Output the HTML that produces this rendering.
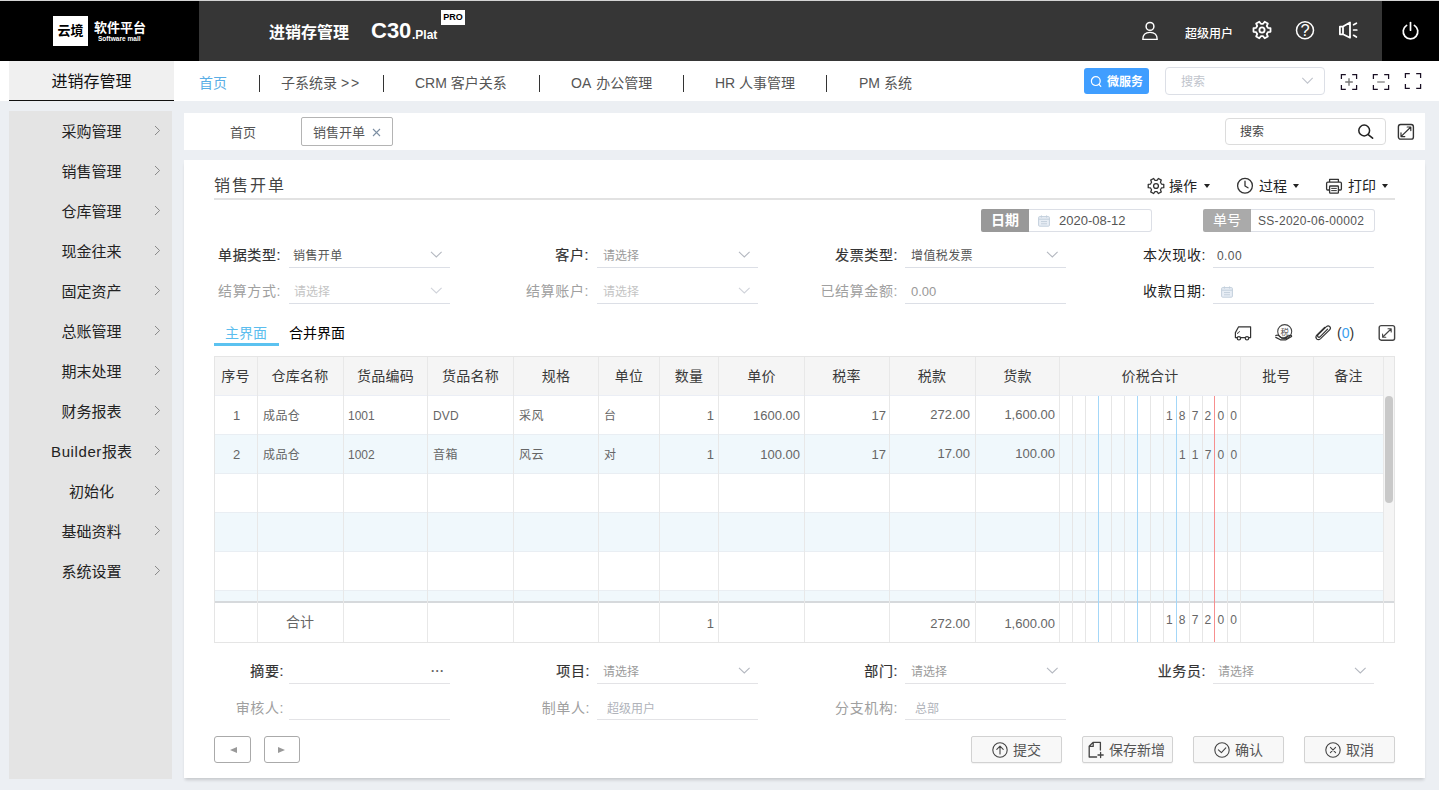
<!DOCTYPE html>
<html lang="zh-CN">
<head>
<meta charset="utf-8">
<title>销售开单 - 进销存管理</title>
<style>
*{box-sizing:border-box;margin:0;padding:0}
html,body{width:1439px;height:790px;overflow:hidden}
body{background:#eceff3;font-family:"Liberation Sans","Noto Sans CJK SC",sans-serif;position:relative;color:#333;font-size:14px}
.a{position:absolute}
.t{position:absolute;white-space:nowrap;line-height:20px;height:20px}
.c{text-align:center}
.r{text-align:right}
svg{position:absolute;overflow:visible}
.ic{fill:none;stroke:#fff;stroke-width:1.5;stroke-linecap:round;stroke-linejoin:round}
.id{fill:none;stroke:#333;stroke-width:1.3;stroke-linecap:round;stroke-linejoin:round}
/* header */
#hd{left:0;top:0;width:1439px;height:61px;background:#363636}
/* nav */
#nv{left:0;top:61px;width:1439px;height:40px;background:#fff}
.ni{font-size:14px;color:#555;top:73px}
.nd{width:1px;height:17px;top:75px;background:#333}
/* sidebar */
#sb{left:9px;top:111px;width:163px;height:668px;background:#e4e4e4}
.si{left:0;width:165px;height:40px;line-height:42px;font-size:15px;color:#222;text-align:center;position:absolute}
.si svg{left:145px;top:14px}
/* form */
.lb{font-size:14px;font-weight:400;-webkit-text-stroke:.2px #333;color:#333;text-align:right;letter-spacing:.6px}
.lg{font-size:14px;color:#a0a0a0;text-align:right;letter-spacing:.6px}
.ul{height:1px;background:#dcdfe6;width:161px}
.ug{background:#e3e3e6}
.v{font-size:12px;color:#555;letter-spacing:.4px;margin-top:1px;margin-left:-1px}
.ph{font-size:12px;color:#9b9b9b;margin-top:1px}
.pl{font-size:12px;color:#c4c4c4;margin-top:1px}
/* table */
.th{font-size:14px;color:#3a3a3a;font-weight:400;letter-spacing:.3px;text-align:center;top:366px}
.vl{width:1px;background:#e8e8e8;top:356px;height:286px}
.td{font-size:12px;color:#666;margin-top:1px;letter-spacing:.4px}
#mg i{position:absolute;top:0;width:1px;height:246px;background:#e6e6e6}
#mg i.b{background:#a4d7f8}
#mg i.rd{background:#f78f8f}
.mn b{display:inline-block;width:12.9px;text-align:center;font-weight:normal;font-size:12px}
.cv path{fill:none;stroke:#b4b8c0;stroke-width:1.1}
.cl path{stroke:#d0d3da}
.btn{height:27px;width:91px;border:1px solid #d2d2d2;border-radius:2px;background:#f8f8f8;top:736px;box-shadow:0 1px 1px rgba(0,0,0,.05)}
</style>
</head>
<body>

<!-- ================= HEADER ================= -->
<div class="a" id="hd">
  <div class="a" style="left:0;top:0;width:1439px;height:1px;background:#d4d4d4"></div>
  <div class="a" style="left:0;top:1px;width:199px;height:60px;background:#000"></div>
  <div class="a" style="left:1382px;top:1px;width:57px;height:60px;background:#000"></div>
  <div class="a c" style="left:53px;top:16px;width:35px;height:30px;background:#fff;color:#000;font-size:13px;font-weight:bold;line-height:30px">云境</div>
  <div class="t" style="left:94px;top:18px;font-size:13px;font-weight:bold;color:#fff">软件平台</div>
  <div class="t" style="left:98px;top:29px;font-size:14px;color:#fff;transform:scale(.468);transform-origin:0 50%;font-weight:bold">Software mall</div>
  <div class="t" style="left:269px;top:23px;font-size:16px;font-weight:bold;color:#fff">进销存管理</div>
  <div class="t" style="left:371px;top:16px;font-size:22px;font-weight:bold;color:#fff;line-height:30px;height:30px">C30</div>
  <div class="t" style="left:412px;top:25px;font-size:12px;font-weight:bold;color:#fff">.Plat</div>
  <div class="a" style="left:441px;top:10px;width:24px;height:15px;background:#fff"></div>
  <div class="a c" style="left:437px;top:7px;width:32px;height:20px;color:#000;font-size:12px;font-weight:bold;line-height:20px;transform:scale(.75);transform-origin:50% 50%">PRO</div>
  <div class="t" style="left:1185px;top:24px;font-size:12px;color:#fff;font-weight:500">超级用户</div>
</div>

<!-- ================= NAV ================= -->
<div class="a" id="nv"></div>
<div class="a c" style="left:9px;top:61px;width:165px;height:40px;background:#f0f0f0;border-bottom:1px solid #111;font-size:16px;color:#111;line-height:42px">进销存管理</div>
<div class="t ni" style="left:199px;color:#5aaee6">首页</div>
<div class="a nd" style="left:259px"></div>
<div class="t ni" style="left:281px">子系统录 <span style="letter-spacing:2px">&gt;&gt;</span></div>
<div class="a nd" style="left:383px"></div>
<div class="t ni" style="left:415px">CRM 客户关系</div>
<div class="a nd" style="left:539px"></div>
<div class="t ni" style="left:571px;word-spacing:2px">OA 办公管理</div>
<div class="a nd" style="left:683px"></div>
<div class="t ni" style="left:715px">HR 人事管理</div>
<div class="a nd" style="left:826px"></div>
<div class="t ni" style="left:859px">PM 系统</div>

<div class="a" style="left:1084px;top:68px;width:65px;height:26px;background:#409eff;border-radius:3px"></div>
<div class="t" style="left:1107px;top:72px;font-size:12px;color:#fff;font-weight:bold">微服务</div>
<div class="a" style="left:1165px;top:67px;width:160px;height:28px;border:1px solid #dcdfe6;border-radius:4px;background:#fff"></div>
<div class="t" style="left:1181px;top:72px;font-size:12px;color:#c0c4cc">搜索</div>

<!-- ================= SIDEBAR ================= -->
<div class="a" id="sb">
  <div class="si" style="top:0">采购管理<svg width="7" height="11" viewBox="0 0 7 11"><path d="M1 1 L5.6 5.5 L1 10" fill="none" stroke="#888" stroke-width="1"/></svg></div>
  <div class="si" style="top:40px">销售管理<svg width="7" height="11" viewBox="0 0 7 11"><path d="M1 1 L5.6 5.5 L1 10" fill="none" stroke="#888" stroke-width="1"/></svg></div>
  <div class="si" style="top:80px">仓库管理<svg width="7" height="11" viewBox="0 0 7 11"><path d="M1 1 L5.6 5.5 L1 10" fill="none" stroke="#888" stroke-width="1"/></svg></div>
  <div class="si" style="top:120px">现金往来<svg width="7" height="11" viewBox="0 0 7 11"><path d="M1 1 L5.6 5.5 L1 10" fill="none" stroke="#888" stroke-width="1"/></svg></div>
  <div class="si" style="top:160px">固定资产<svg width="7" height="11" viewBox="0 0 7 11"><path d="M1 1 L5.6 5.5 L1 10" fill="none" stroke="#888" stroke-width="1"/></svg></div>
  <div class="si" style="top:200px">总账管理<svg width="7" height="11" viewBox="0 0 7 11"><path d="M1 1 L5.6 5.5 L1 10" fill="none" stroke="#888" stroke-width="1"/></svg></div>
  <div class="si" style="top:240px">期末处理<svg width="7" height="11" viewBox="0 0 7 11"><path d="M1 1 L5.6 5.5 L1 10" fill="none" stroke="#888" stroke-width="1"/></svg></div>
  <div class="si" style="top:280px">财务报表<svg width="7" height="11" viewBox="0 0 7 11"><path d="M1 1 L5.6 5.5 L1 10" fill="none" stroke="#888" stroke-width="1"/></svg></div>
  <div class="si" style="top:320px"><span style="letter-spacing:.6px">Builder</span>报表<svg width="7" height="11" viewBox="0 0 7 11"><path d="M1 1 L5.6 5.5 L1 10" fill="none" stroke="#888" stroke-width="1"/></svg></div>
  <div class="si" style="top:360px">初始化<svg width="7" height="11" viewBox="0 0 7 11"><path d="M1 1 L5.6 5.5 L1 10" fill="none" stroke="#888" stroke-width="1"/></svg></div>
  <div class="si" style="top:400px">基础资料<svg width="7" height="11" viewBox="0 0 7 11"><path d="M1 1 L5.6 5.5 L1 10" fill="none" stroke="#888" stroke-width="1"/></svg></div>
  <div class="si" style="top:440px">系统设置<svg width="7" height="11" viewBox="0 0 7 11"><path d="M1 1 L5.6 5.5 L1 10" fill="none" stroke="#888" stroke-width="1"/></svg></div>
</div>

<!-- ================= TAB BAR ================= -->
<div class="a" style="left:184px;top:113px;width:1241px;height:37px;background:#fff"></div>
<div class="t" style="left:230px;top:123px;font-size:13px;color:#555">首页</div>
<div class="a" style="left:301px;top:117px;width:92px;height:29px;border:1px solid #b4b4b4;border-radius:2px;background:#fff"></div>
<div class="t" style="left:313px;top:123px;font-size:13px;color:#555">销售开单</div>
<div class="a" style="left:1224.5px;top:118px;width:161px;height:27px;border:1px solid #dcdcdc;border-radius:4px;background:#fff"></div>
<div class="t" style="left:1240px;top:122px;font-size:12px;color:#444">搜索</div>

<!-- ================= MAIN PANEL ================= -->
<div class="a" style="left:184px;top:160px;width:1241px;height:618px;background:#fff;box-shadow:0 3px 3px -1px rgba(0,0,0,.16)"></div>
<div class="t" style="left:214px;top:176px;font-size:16px;color:#444;letter-spacing:2px">销售开单</div>
<div class="a" style="left:214px;top:198px;width:1181px;height:2px;background:#e2e2e2"></div>
<div class="t" style="left:1169px;top:176px;font-size:14px;color:#222">操作</div>
<div class="t" style="left:1259px;top:176px;font-size:14px;color:#222">过程</div>
<div class="t" style="left:1348px;top:176px;font-size:14px;color:#222">打印</div>
<div class="a" style="left:1204px;top:184px;border:3.5px solid transparent;border-top:4px solid #222;border-bottom:0"></div>
<div class="a" style="left:1293px;top:184px;border:3.5px solid transparent;border-top:4px solid #222;border-bottom:0"></div>
<div class="a" style="left:1382px;top:184px;border:3.5px solid transparent;border-top:4px solid #222;border-bottom:0"></div>

<!-- date / number -->
<div class="a c" style="left:981px;top:209px;width:48px;height:23px;background:#999;color:#fff;font-size:14px;font-weight:bold;line-height:23px;border-radius:2px 0 0 2px">日期</div>
<div class="a" style="left:1029px;top:209px;width:123px;height:23px;border:1px solid #dcdfe6;border-left:0;border-radius:0 3px 3px 0"></div>
<div class="t" style="left:1059px;top:211px;font-size:13px;color:#555">2020-08-12</div>
<div class="a c" style="left:1203px;top:209px;width:48px;height:23px;background:#aaa;color:#fff;font-size:14px;line-height:23px;border-radius:2px 0 0 2px">单号</div>
<div class="a" style="left:1251px;top:209px;width:124px;height:23px;border:1px solid #dcdfe6;border-left:0;border-radius:0 3px 3px 0"></div>
<div class="t" style="left:1258px;top:211px;font-size:12px;color:#555;letter-spacing:.3px">SS-2020-06-00002</div>

<!-- form row 1 -->
<div class="t lb" style="left:180px;width:101px;top:245px">单据类型:</div>
<div class="t v" style="left:294px;top:245px">销售开单</div>
<div class="a ul" style="left:289px;top:267px"></div>
<div class="t lb" style="left:488px;width:101px;top:245px">客户:</div>
<div class="t ph" style="left:603px;top:245px">请选择</div>
<div class="a ul" style="left:597px;top:267px"></div>
<div class="t lb" style="left:797px;width:101px;top:245px">发票类型:</div>
<div class="t v" style="left:912px;top:245px">增值税发票</div>
<div class="a ul" style="left:905px;top:267px"></div>
<div class="t lb" style="left:1105px;width:101px;top:245px;-webkit-text-stroke:0;color:#222">本次现收:</div>
<div class="t v" style="left:1218px;top:245px">0.00</div>
<div class="a ul" style="left:1213px;top:267px"></div>
<!-- form row 2 -->
<div class="t lg" style="left:180px;width:101px;top:281px">结算方式:</div>
<div class="t pl" style="left:294px;top:281px">请选择</div>
<div class="a ul" style="left:289px;top:303px"></div>
<div class="t lg" style="left:488px;width:101px;top:281px">结算账户:</div>
<div class="t pl" style="left:603px;top:281px">请选择</div>
<div class="a ul" style="left:597px;top:303px"></div>
<div class="t lg" style="left:797px;width:101px;top:281px">已结算金额:</div>
<div class="t ph" style="left:911px;top:281px;font-size:13px;color:#999">0.00</div>
<div class="a ul" style="left:905px;top:303px"></div>
<div class="t lb" style="left:1105px;width:101px;top:281px;-webkit-text-stroke:0;color:#222">收款日期:</div>
<div class="a ul" style="left:1213px;top:303px"></div>

<!-- inner tabs -->
<div class="t" style="left:225px;top:323px;font-size:14px;color:#5bbdee">主界面</div>
<div class="a" style="left:214px;top:343px;width:65px;height:3px;background:#5bc2f0"></div>
<div class="t" style="left:289px;top:323px;font-size:14px;color:#000">合并界面</div>
<div class="t" style="left:1337px;top:323px;font-size:14px;color:#333">(<span style="color:#3a9ff0">0</span>)</div>
<!-- ================= TABLE ================= -->
<div class="a" style="left:214px;top:356px;width:1181px;height:40px;background:#f5f5f5"></div>
<div class="a" style="left:214px;top:434px;width:1170px;height:39px;background:#f0f8fc"></div>
<div class="a" style="left:214px;top:512px;width:1170px;height:39px;background:#f0f8fc"></div>
<div class="a" style="left:214px;top:590px;width:1170px;height:12px;background:#f0f8fc"></div>
<div class="a" style="left:1384px;top:395px;width:10px;height:207px;background:#f5f5f5"></div>
<div class="a" style="left:1385px;top:396px;width:8px;height:107px;background:#c9c9c9;border-radius:4px"></div>
<!-- horizontal lines -->
<div class="a" style="left:214px;top:395px;width:1170px;height:1px;background:#ebeef5"></div>
<div class="a" style="left:214px;top:434px;width:1170px;height:1px;background:#e9eef3"></div>
<div class="a" style="left:214px;top:473px;width:1170px;height:1px;background:#e9eef3"></div>
<div class="a" style="left:214px;top:512px;width:1170px;height:1px;background:#e9eef3"></div>
<div class="a" style="left:214px;top:551px;width:1170px;height:1px;background:#e9eef3"></div>
<div class="a" style="left:214px;top:590px;width:1170px;height:1px;background:#e9eef3"></div>
<div class="a" style="left:214px;top:601px;width:1181px;height:2px;background:#d6d9dc"></div>
<!-- vertical lines -->
<div class="a vl" style="left:257px"></div>
<div class="a vl" style="left:343px"></div>
<div class="a vl" style="left:427px"></div>
<div class="a vl" style="left:513px"></div>
<div class="a vl" style="left:598px"></div>
<div class="a vl" style="left:659px"></div>
<div class="a vl" style="left:718px"></div>
<div class="a vl" style="left:804px"></div>
<div class="a vl" style="left:889px"></div>
<div class="a vl" style="left:975px"></div>
<div class="a vl" style="left:1059px"></div>
<div class="a vl" style="left:1240px"></div>
<div class="a vl" style="left:1313px"></div>
<div class="a vl" style="left:1383px"></div>
<!-- money grid -->
<div class="a" id="mg" style="left:1060px;top:396px;width:180px;height:246px">
  <i style="left:12.4px"></i><i style="left:25.3px"></i><i class="b" style="left:38.2px"></i>
  <i style="left:51.1px"></i><i style="left:64px"></i><i class="b" style="left:77px"></i>
  <i style="left:89.9px"></i><i style="left:102.8px"></i><i class="b" style="left:115.7px"></i>
  <i style="left:128.6px"></i><i style="left:141.5px"></i><i class="rd" style="left:154.1px"></i>
  <i style="left:167.3px"></i>
</div>
<div class="a" style="left:214px;top:356px;width:1181px;height:287px;border:1px solid #e5e5e5"></div>
<!-- header text -->
<div class="t th" style="left:214px;width:43px">序号</div>
<div class="t th" style="left:257px;width:86px">仓库名称</div>
<div class="t th" style="left:343px;width:85px">货品编码</div>
<div class="t th" style="left:428px;width:85px">货品名称</div>
<div class="t th" style="left:513px;width:86px">规格</div>
<div class="t th" style="left:599px;width:60px">单位</div>
<div class="t th" style="left:659px;width:60px">数量</div>
<div class="t th" style="left:719px;width:85px">单价</div>
<div class="t th" style="left:804px;width:85px">税率</div>
<div class="t th" style="left:889px;width:86px">税款</div>
<div class="t th" style="left:975px;width:85px">货款</div>
<div class="t th" style="left:1060px;width:180px">价税合计</div>
<div class="t th" style="left:1240px;width:73px">批号</div>
<div class="t th" style="left:1313px;width:71px">备注</div>
<!-- row 1 -->
<div class="t td c" style="left:214px;width:45px;top:405px;font-size:13px;letter-spacing:0">1</div>
<div class="t td" style="left:263px;top:405px">成品仓</div>
<div class="t td" style="left:348px;top:405px;font-size:12px;letter-spacing:0">1001</div>
<div class="t td" style="left:433px;top:405px;font-size:12px;letter-spacing:.2px">DVD</div>
<div class="t td" style="left:519px;top:405px">采风</div>
<div class="t td" style="left:604px;top:405px">台</div>
<div class="t td r" style="left:659px;width:55px;top:405px;font-size:13px;letter-spacing:0">1</div>
<div class="t td r" style="left:719px;width:81px;top:405px;font-size:13px;letter-spacing:0">1600.00</div>
<div class="t td r" style="left:804px;width:82px;top:405px;font-size:13px;letter-spacing:0">17</div>
<div class="t td r" style="left:889px;width:81px;top:404px;font-size:13px;letter-spacing:0">272.00</div>
<div class="t td r" style="left:975px;width:80px;top:404px;font-size:13px;letter-spacing:0">1,600.00</div>
<div class="t td mn" style="left:1163px;top:405px"><b>1</b><b>8</b><b>7</b><b>2</b><b>0</b><b>0</b></div>
<!-- row 2 -->
<div class="t td c" style="left:214px;width:45px;top:444px;font-size:13px;letter-spacing:0">2</div>
<div class="t td" style="left:263px;top:444px">成品仓</div>
<div class="t td" style="left:348px;top:444px;font-size:12px;letter-spacing:0">1002</div>
<div class="t td" style="left:433px;top:444px">音箱</div>
<div class="t td" style="left:519px;top:444px">风云</div>
<div class="t td" style="left:604px;top:444px">对</div>
<div class="t td r" style="left:659px;width:55px;top:444px;font-size:13px;letter-spacing:0">1</div>
<div class="t td r" style="left:719px;width:81px;top:444px;font-size:13px;letter-spacing:0">100.00</div>
<div class="t td r" style="left:804px;width:82px;top:444px;font-size:13px;letter-spacing:0">17</div>
<div class="t td r" style="left:889px;width:81px;top:443px;font-size:13px;letter-spacing:0">17.00</div>
<div class="t td r" style="left:975px;width:80px;top:443px;font-size:13px;letter-spacing:0">100.00</div>
<div class="t td mn" style="left:1176px;top:444px"><b>1</b><b>1</b><b>7</b><b>0</b><b>0</b></div>
<!-- footer -->
<div class="t c" style="left:257px;width:86px;top:612px;font-size:14px;color:#666">合计</div>
<div class="t td r" style="left:659px;width:55px;top:613px;font-size:13px;letter-spacing:0">1</div>
<div class="t td r" style="left:889px;width:81px;top:613px;font-size:13px;letter-spacing:0">272.00</div>
<div class="t td r" style="left:975px;width:80px;top:613px;font-size:13px;letter-spacing:0">1,600.00</div>
<div class="t td mn" style="left:1163px;top:609px"><b>1</b><b>8</b><b>7</b><b>2</b><b>0</b><b>0</b></div>
<!-- ================= BOTTOM FORM ================= -->
<div class="t lb" style="left:180px;width:104px;top:661px">摘要:</div>
<div class="a ul ug" style="left:289px;top:683px"></div>
<div class="t" style="left:431px;top:661px;font-size:12px;color:#666;letter-spacing:.5px;font-weight:bold">···</div>
<div class="t lb" style="left:488px;width:102px;top:661px">项目:</div>
<div class="t ph" style="left:603px;top:661px">请选择</div>
<div class="a ul ug" style="left:597px;top:683px"></div>
<div class="t lb" style="left:797px;width:101px;top:661px">部门:</div>
<div class="t ph" style="left:911px;top:661px">请选择</div>
<div class="a ul ug" style="left:905px;top:683px"></div>
<div class="t lb" style="left:1105px;width:101px;top:661px">业务员:</div>
<div class="t ph" style="left:1218px;top:661px">请选择</div>
<div class="a ul ug" style="left:1213px;top:683px"></div>

<div class="t lg" style="left:180px;width:104px;top:698px">审核人:</div>
<div class="a ul ug" style="left:289px;top:719px"></div>
<div class="t lg" style="left:488px;width:102px;top:698px">制单人:</div>
<div class="t ph" style="left:607px;top:698px;color:#b0b3ba">超级用户</div>
<div class="a ul ug" style="left:597px;top:719px"></div>
<div class="t lg" style="left:797px;width:101px;top:698px">分支机构:</div>
<div class="t ph" style="left:915px;top:698px;color:#b0b3ba">总部</div>
<div class="a ul ug" style="left:905px;top:719px"></div>

<!-- pager -->
<div class="a" style="left:214px;top:736px;width:37px;height:27px;border:1px solid #aaa;border-radius:3px;background:#fff"></div>
<div class="a" style="left:264px;top:736px;width:36px;height:27px;border:1px solid #aaa;border-radius:3px;background:#fff"></div>
<div class="a" style="left:229.5px;top:746.5px;border:3.5px solid transparent;border-right:7px solid #999;border-left:0"></div>
<div class="a" style="left:278px;top:746.5px;border:3.5px solid transparent;border-left:7px solid #999;border-right:0"></div>

<!-- action buttons -->
<div class="a btn" style="left:971px"></div>
<div class="a btn" style="left:1082px"></div>
<div class="a btn" style="left:1193px"></div>
<div class="a btn" style="left:1304px"></div>
<div class="t" style="left:1013px;top:740px;font-size:14px;color:#555">提交</div>
<div class="t" style="left:1109px;top:740px;font-size:14px;color:#555">保存新增</div>
<div class="t" style="left:1235px;top:740px;font-size:14px;color:#555">确认</div>
<div class="t" style="left:1346px;top:740px;font-size:14px;color:#555">取消</div>
<!-- ================= ICONS ================= -->
<!-- header: user -->
<svg style="left:1141px;top:21px" width="18" height="20" viewBox="0 0 18 20"><circle cx="9" cy="5.4" r="3.9" class="ic"/><path d="M1.8 18.4 C1.8 13.6 4.8 11.4 9 11.4 C13.2 11.4 16.2 13.6 16.2 18.4 Z" class="ic" style="stroke-width:1.4"/></svg>
<!-- header: gear -->
<svg style="left:1252px;top:20px" width="20" height="20" viewBox="0 0 20 20"><path d="M15.93 7.87 L18.51 8.19 L18.51 11.81 L15.93 12.13 L14.81 14.07 L15.82 16.47 L12.69 18.27 L11.12 16.20 L8.88 16.20 L7.31 18.27 L4.18 16.47 L5.19 14.07 L4.07 12.13 L1.49 11.81 L1.49 8.19 L4.07 7.87 L5.19 5.93 L4.18 3.53 L7.31 1.73 L8.88 3.80 L11.12 3.80 L12.69 1.73 L15.82 3.53 L14.81 5.93Z" class="ic" style="stroke-width:1.8"/><circle cx="10" cy="10" r="2.6" class="ic" style="stroke-width:1.8"/></svg>
<!-- header: help -->
<svg style="left:1295px;top:20px" width="20" height="20" viewBox="0 0 20 20"><circle cx="10" cy="10.2" r="8.5" class="ic"/><text x="10" y="16.4" text-anchor="middle" font-size="16.5" fill="#fff" font-family="Liberation Sans, sans-serif">?</text></svg>
<!-- header: speaker -->
<svg style="left:1338px;top:20px" width="20" height="20" viewBox="0 0 20 20"><path d="M1.9 6.6 H5 L12 2.4 V17.7 L5 14.3 H1.9 Z M5 6.6 V14.3" class="ic" style="stroke-width:1.8"/><path d="M15.6 4.8 L18.4 3.2 M15.6 10 H18.8 M15.6 15.3 L18.4 17" class="ic" style="stroke-width:1.7"/></svg>
<!-- header: power -->
<svg style="left:1400px;top:20px" width="22" height="22" viewBox="0 0 22 22"><path d="M6.6 5.4 A7.3 7.3 0 1 0 14.4 5.4" class="ic" style="stroke-width:1.7"/><path d="M10.5 2.6 V10.2" class="ic" style="stroke-width:1.7"/></svg>

<!-- nav: search icon in button -->
<svg style="left:1089px;top:74px" width="14" height="14" viewBox="0 0 14 14"><circle cx="6.8" cy="7.1" r="4.4" class="ic" style="stroke-width:1.2"/><path d="M10 10.4 L11.8 12.3" class="ic" style="stroke-width:1.2"/></svg>
<!-- nav: select chevron -->
<svg style="left:1301px;top:76px" width="13" height="9" viewBox="0 0 13 9"><path d="M1.3 1.9 L6.5 7.2 L11.7 1.9" fill="none" stroke="#c0c4cc" stroke-width="1.1"/></svg>
<!-- nav: zoom in / out / full -->
<svg style="left:1340px;top:73px" width="18" height="18" viewBox="0 0 18 18"><path d="M1.4 6 V1.6 H5.8 M12.2 1.6 H16.6 V6 M16.6 12 V16.4 H12.2 M5.8 16.4 H1.4 V12" fill="none" stroke="#1a1024" stroke-width="1.25"/><path d="M5.2 9 H12.8 M9 5.2 V12.8" fill="none" stroke="#777" stroke-width="1.4"/></svg>
<svg style="left:1372px;top:73px" width="18" height="18" viewBox="0 0 18 18"><path d="M1.4 6 V1.6 H5.8 M12.2 1.6 H16.6 V6 M16.6 12 V16.4 H12.2 M5.8 16.4 H1.4 V12" fill="none" stroke="#1a1024" stroke-width="1.25"/><path d="M5.2 9 H12.8" fill="none" stroke="#999" stroke-width="1.6"/></svg>
<svg style="left:1404px;top:72px" width="18" height="18" viewBox="0 0 18 18"><path d="M1.4 6 V1.6 H5.8 M12.2 1.6 H16.6 V6 M16.6 12 V16.4 H12.2 M5.8 16.4 H1.4 V12" fill="none" stroke="#1a1024" stroke-width="1.25"/></svg>

<!-- tab close x -->
<svg style="left:372px;top:128px" width="9" height="9" viewBox="0 0 9 9"><path d="M1 1 L8 8 M8 1 L1 8" fill="none" stroke="#7d8fa3" stroke-width="1.1"/></svg>
<!-- tab bar search icon -->
<svg style="left:1357px;top:123px" width="18" height="18" viewBox="0 0 18 18"><circle cx="7.2" cy="7.5" r="5.4" class="id" style="stroke:#222;stroke-width:1.5"/><path d="M11.2 11.6 L15.6 15.2" class="id" style="stroke:#222;stroke-width:1.6"/></svg>
<!-- tab bar expand -->
<svg style="left:1397px;top:123px" width="18" height="18" viewBox="0 0 18 18"><rect x="1.4" y="1.5" width="15" height="14.6" rx="2.2" class="id" style="stroke-width:1.4"/><path d="M4.2 13.4 L13.6 4.2 M4 9.8 V13.6 H7.8 M10.2 4 H13.8 V7.6" class="id" style="stroke-width:1.2"/></svg>

<!-- panel: gear / clock / printer -->
<svg style="left:1147px;top:177px" width="18" height="18" viewBox="0 0 17 17"><path d="M13.67 6.64 L15.84 6.94 L15.84 10.06 L13.67 10.36 L12.70 12.05 L13.52 14.07 L10.82 15.63 L9.47 13.91 L7.53 13.91 L6.18 15.63 L3.48 14.07 L4.30 12.05 L3.33 10.36 L1.16 10.06 L1.16 6.94 L3.33 6.64 L4.30 4.95 L3.48 2.93 L6.18 1.37 L7.53 3.09 L9.47 3.09 L10.82 1.37 L13.52 2.93 L12.70 4.95Z" class="id" style="stroke-width:1.2"/><circle cx="8.5" cy="8.5" r="2.3" class="id" style="stroke-width:1.2"/></svg>
<svg style="left:1236px;top:177px" width="18" height="18" viewBox="0 0 18 18"><circle cx="9" cy="8.7" r="7.4" class="id"/><path d="M9 4.2 V9 L12 10.8" class="id"/></svg>
<svg style="left:1325px;top:177px" width="18" height="18" viewBox="0 0 18 18"><path d="M4.6 5.2 V2.4 H13.4 V5.2 M4.4 13 H2.6 Q1.6 13 1.6 12 V6.4 Q1.6 5.2 2.8 5.2 H15.2 Q16.4 5.2 16.4 6.4 V12 Q16.4 13 15.4 13 H13.6" class="id"/><rect x="4.6" y="9" width="8.8" height="7.2" rx="0.8" class="id"/><path d="M6.6 11.4 H11.4 M6.6 13.6 H11.4" class="id" style="stroke-width:1"/></svg>

<!-- calendar icons -->
<svg style="left:1038px;top:215px" width="12" height="12" viewBox="0 0 12 12"><rect x="0.6" y="1.6" width="10.8" height="9.6" rx="1" fill="#e8eef5" stroke="#c3cfdc" stroke-width="1"/><path d="M0.6 4.2 H11.4 M3.4 0.4 V2.6 M8.6 0.4 V2.6 M3 6.6 H9 M3 8.8 H9" fill="none" stroke="#c3cfdc" stroke-width="1"/></svg>
<svg style="left:1221px;top:285.5px" width="12" height="12" viewBox="0 0 12 12"><rect x="0.6" y="1.6" width="10.8" height="9.6" rx="1" fill="#e8eef5" stroke="#c3cfdc" stroke-width="1"/><path d="M0.6 4.2 H11.4 M3.4 0.4 V2.6 M8.6 0.4 V2.6 M3 6.6 H9 M3 8.8 H9" fill="none" stroke="#c3cfdc" stroke-width="1"/></svg>

<!-- select chevrons -->
<svg class="cv" style="left:430px;top:250px" width="13" height="9" viewBox="0 0 13 9"><path d="M1 1.8 L6.3 7 L11.6 1.8"/></svg>
<svg class="cv" style="left:738px;top:250px" width="13" height="9" viewBox="0 0 13 9"><path d="M1 1.8 L6.3 7 L11.6 1.8"/></svg>
<svg class="cv" style="left:1046px;top:250px" width="13" height="9" viewBox="0 0 13 9"><path d="M1 1.8 L6.3 7 L11.6 1.8"/></svg>
<svg class="cv cl" style="left:430px;top:286px" width="13" height="9" viewBox="0 0 13 9"><path d="M1 1.8 L6.3 7 L11.6 1.8"/></svg>
<svg class="cv cl" style="left:738px;top:286px" width="13" height="9" viewBox="0 0 13 9"><path d="M1 1.8 L6.3 7 L11.6 1.8"/></svg>
<svg class="cv" style="left:738px;top:666px" width="13" height="9" viewBox="0 0 13 9"><path d="M1 1.8 L6.3 7 L11.6 1.8"/></svg>
<svg class="cv" style="left:1046px;top:666px" width="13" height="9" viewBox="0 0 13 9"><path d="M1 1.8 L6.3 7 L11.6 1.8"/></svg>
<svg class="cv" style="left:1354px;top:666px" width="13" height="9" viewBox="0 0 13 9"><path d="M1 1.8 L6.3 7 L11.6 1.8"/></svg>

<!-- toolbar: truck / tax / clip / expand -->
<svg style="left:1234px;top:325px" width="19" height="17" viewBox="0 0 19 17"><path d="M3.4 12.6 H1.4 V7.6 L4.6 1.8 H16.6 V12.6 H15 M6.4 12.6 H11" class="id" style="stroke-width:1.2"/><circle cx="4.9" cy="13.3" r="1.7" class="id" style="stroke-width:1.2"/><circle cx="13" cy="13.3" r="1.7" class="id" style="stroke-width:1.2"/><path d="M3.4 8.4 Q4.8 8.2 5.4 6.6" class="id" style="stroke-width:1"/></svg>
<svg style="left:1275px;top:323px" width="19" height="19" viewBox="0 0 19 19"><circle cx="9.7" cy="8.6" r="7" class="id" style="stroke-width:1.1;stroke:#444"/><text x="9.7" y="11.6" text-anchor="middle" font-size="8.5" fill="#555" font-family="Noto Sans CJK SC, sans-serif">税</text><path d="M0.8 12.6 Q2.2 11.6 3.6 12.6 L6.4 14.8 H11 Q12.2 14.8 12.2 13.8 M9.4 14.8 L15 12.4 Q16.6 12.2 16.6 13.6 L11 16.8 H5.4 L0.8 14.4" class="id" style="stroke-width:1.2"/></svg>
<svg style="left:1315px;top:324px" width="17" height="17" viewBox="0 0 17 17"><path d="M12.6 5.2 L5.2 12.6 Q4 13.8 3 12.8 Q2 11.8 3.2 10.6 L11.4 2.6 Q13.2 1 14.8 2.6 Q16.2 4.2 14.6 5.8 L5.6 14.6 Q3.4 16.6 1.6 14.8 Q0 12.8 2 10.8 L9.6 3.4" class="id" style="stroke-width:1.2"/></svg>
<svg style="left:1378px;top:324px" width="18" height="18" viewBox="0 0 18 18"><rect x="1.2" y="1.6" width="15.4" height="14.6" rx="2" class="id" style="stroke-width:1.4;stroke:#444"/><path d="M4.8 13 L13 5 M4.6 10 V13.2 H7.8 M10 4.8 H13.2 V8" class="id" style="stroke-width:1.1;stroke:#444"/></svg>

<!-- bottom button icons -->
<svg style="left:991px;top:741px" width="18" height="18" viewBox="0 0 18 18"><circle cx="9" cy="9" r="7.2" class="id" style="stroke:#444;stroke-width:1.1"/><path d="M9 13 V5.4 M5.8 8.4 L9 5.2 L12.2 8.4" class="id" style="stroke:#444;stroke-width:1.1"/></svg>
<svg style="left:1088px;top:741px" width="17" height="18" viewBox="0 0 17 18"><path d="M12.4 9 V1.4 H5 L1.2 5.2 V16 H8.6 M5.2 1.6 V5.4 H1.4" class="id" style="stroke:#444;stroke-width:1.3"/><path d="M12.6 11.4 V16.6 M10 14 H15.2" class="id" style="stroke:#444;stroke-width:1.3"/></svg>
<svg style="left:1213px;top:741px" width="18" height="18" viewBox="0 0 18 18"><circle cx="9" cy="9" r="7.2" class="id" style="stroke:#444;stroke-width:1.1"/><path d="M5.4 8.8 L8.4 11.6 L12.8 6.8" class="id" style="stroke:#444;stroke-width:1.1"/></svg>
<svg style="left:1324px;top:741px" width="18" height="18" viewBox="0 0 18 18"><circle cx="9" cy="9" r="7.2" class="id" style="stroke:#444;stroke-width:1.1"/><path d="M6.4 6.4 L11.6 11.6 M11.6 6.4 L6.4 11.6" class="id" style="stroke:#444;stroke-width:1.1"/></svg>

</body>
</html>
